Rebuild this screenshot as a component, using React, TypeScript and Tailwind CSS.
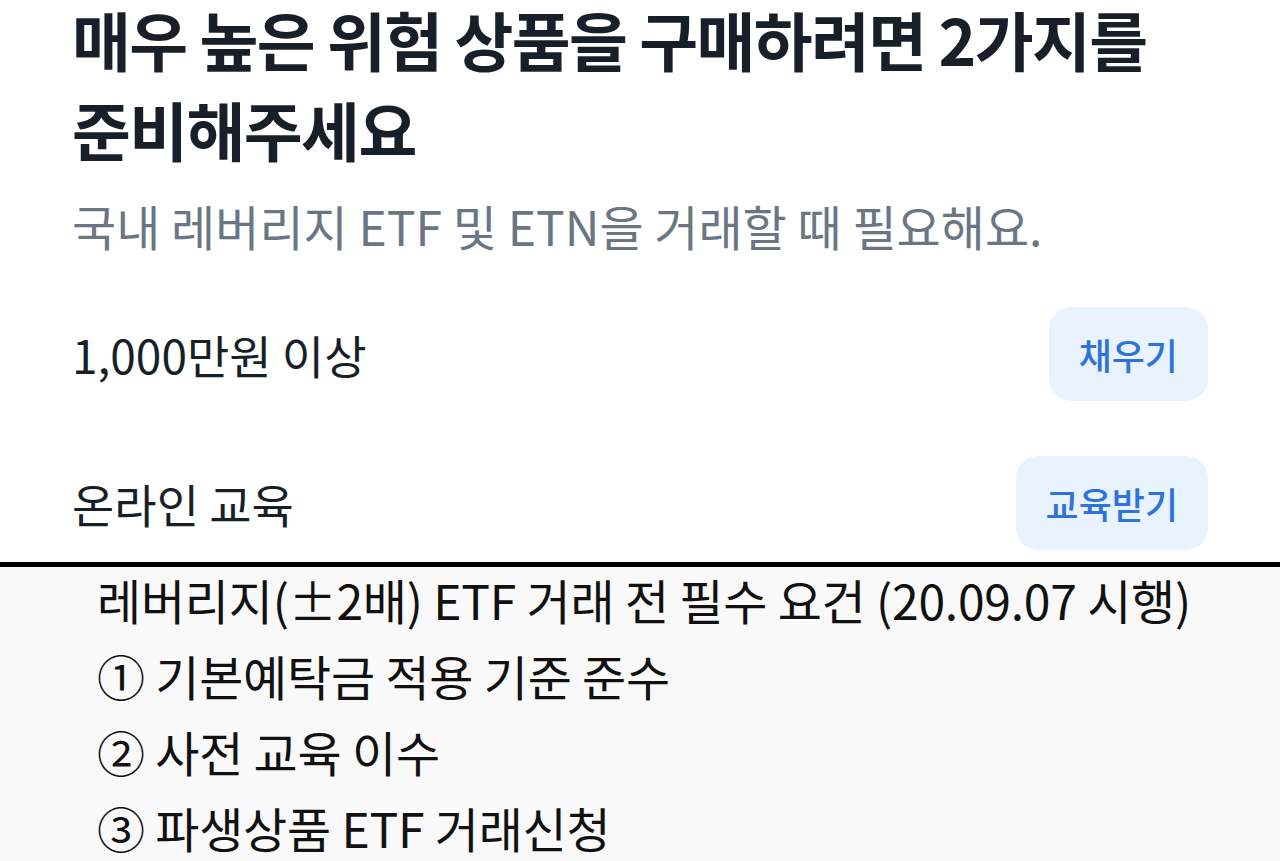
import React from "react";

const requirements = [
  "레버리지(±2배) ETF 거래 전 필수 요건 (20.09.07 시행)",
  "① 기본예탁금 적용 기준 준수",
  "② 사전 교육 이수",
  "③ 파생상품 ETF 거래신청",
];

function ConditionRow({ label, action }: { label: string; action: string }) {
  return (
    <div className="flex items-center justify-between">
      <span className="text-[46px] leading-[60px] text-[#191f28]">{label}</span>
      <button className="h-[94px] px-[30px] rounded-[22px] bg-[#e8f3ff] text-[36px] font-medium text-[#2f73d9]">
        {action}
      </button>
    </div>
  );
}

export default function App() {
  return (
    <div
      className="w-[1280px] h-[861px] flex flex-col overflow-hidden"
      style={{ fontFamily: '"Noto Sans CJK KR", "Noto Sans", sans-serif' }}
    >
      {/* bottom sheet content */}
      <div className="h-[562px] shrink-0 bg-white px-[72px] flex flex-col">
        <h1 className="flex flex-col gap-[14px] text-[64px] leading-[76px] font-bold tracking-[-0.025em] text-[#191f28]">
          <span>매우 높은 위험 상품을 구매하려면 2가지를</span>
          <span>준비해주세요</span>
        </h1>
        <p className="mt-[29px] text-[48px] leading-[60px] text-[#6b7684]">
          국내 레버리지 ETF 및 ETN을 거래할 때 필요해요.
        </p>
        <div className="mt-[52px] flex flex-col gap-[55px]">
          <ConditionRow label="1,000만원 이상" action="채우기" />
          <ConditionRow label="온라인 교육" action="교육받기" />
        </div>
      </div>

      <div className="h-[5px] shrink-0 bg-black" />

      {/* notice caption */}
      <div className="flex-1 bg-[#f9f9f9] pl-[97px] flex flex-col gap-[12px] text-[#111]">
        {requirements.map((item) => (
          <p key={item} className="text-[48px] leading-[64px] tracking-[-0.005em]">
            {item}
          </p>
        ))}
      </div>
    </div>
  );
}
